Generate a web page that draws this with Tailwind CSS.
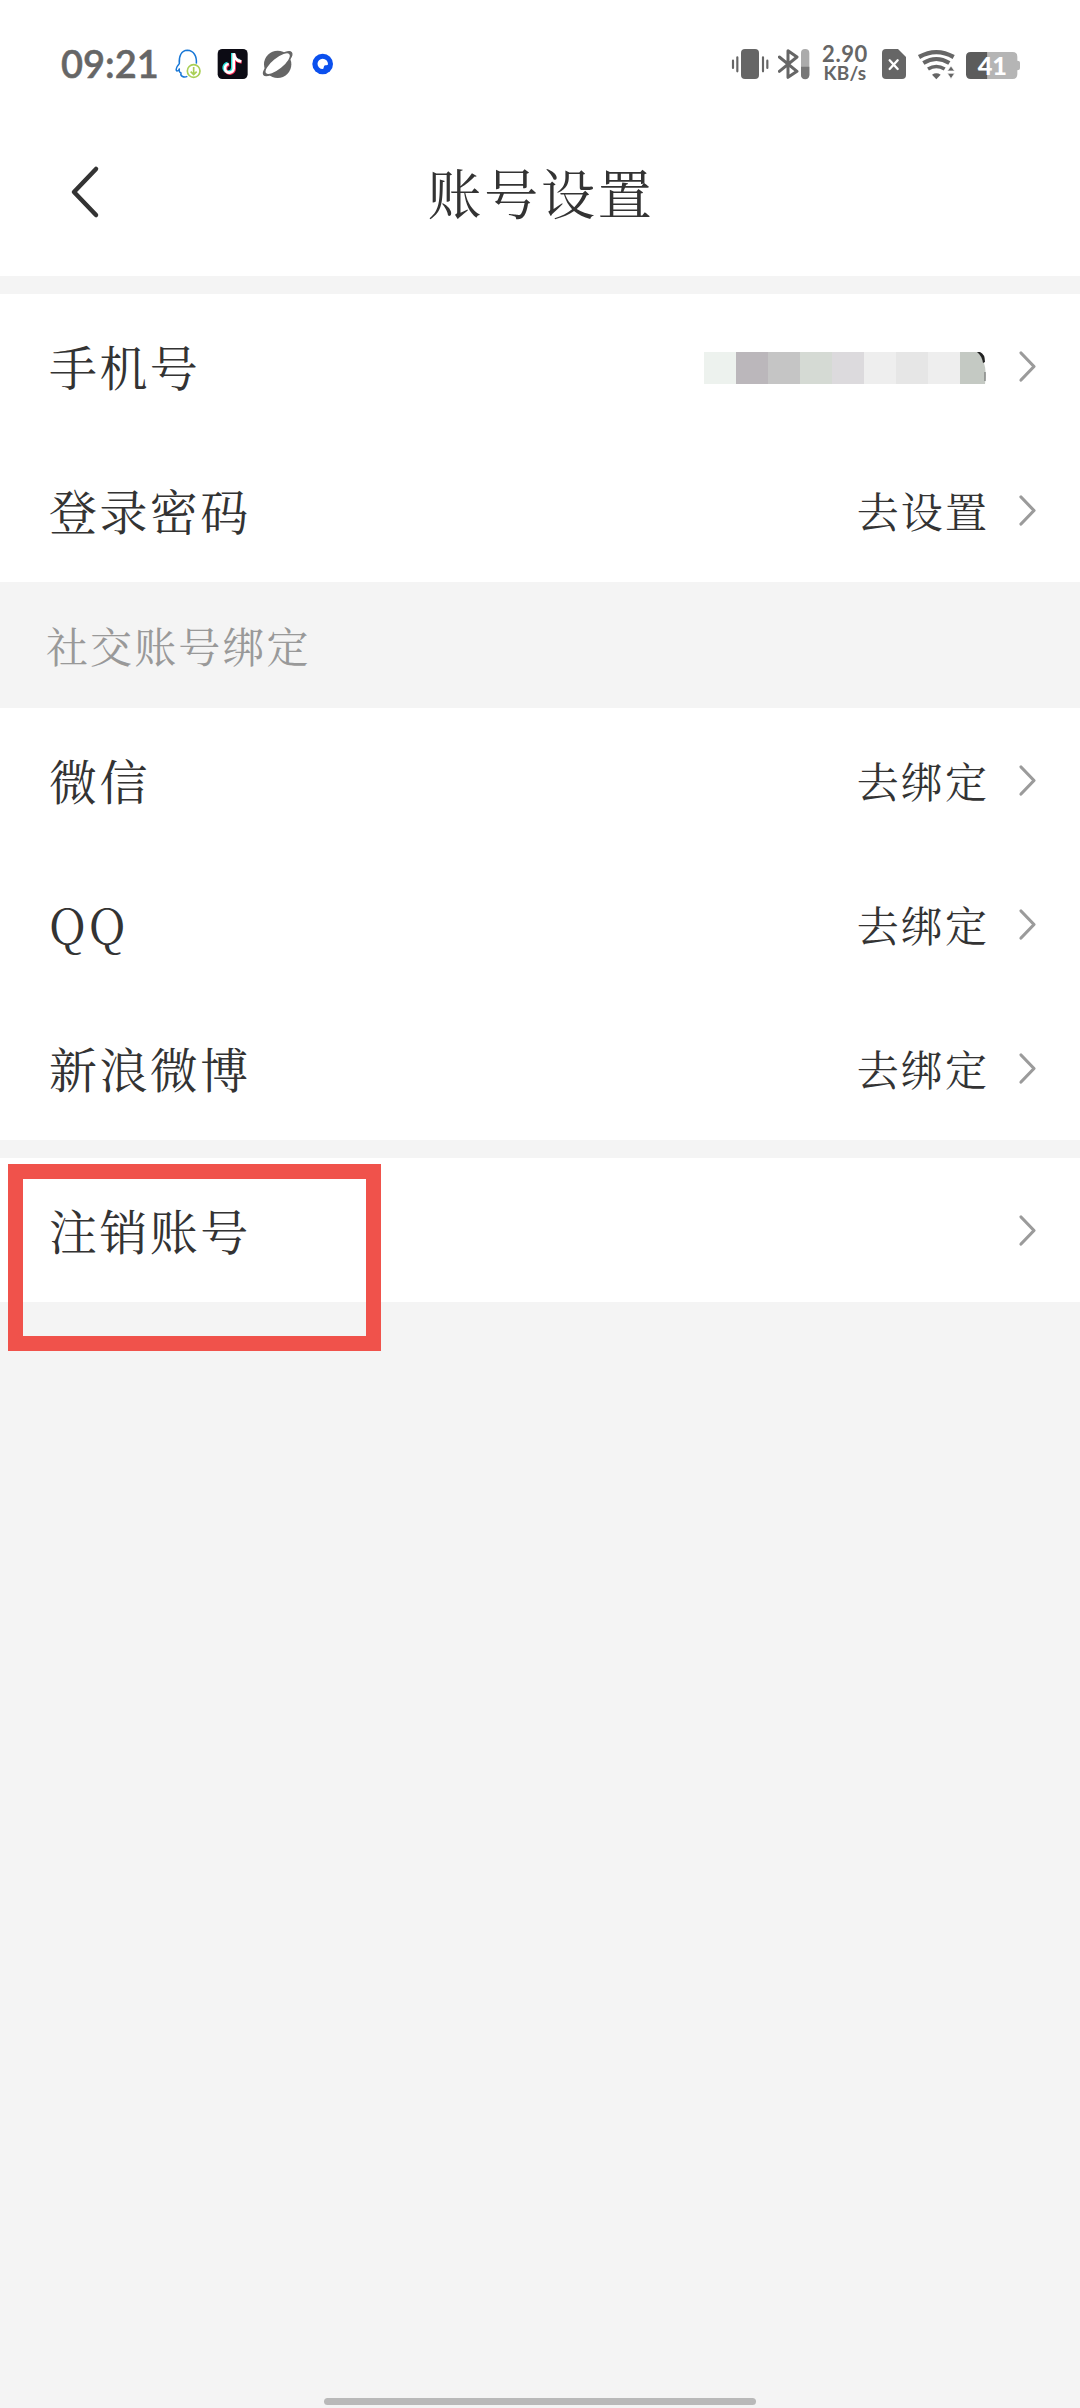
<!DOCTYPE html>
<html lang="zh-CN">
<head>
<meta charset="utf-8">
<title>账号设置</title>
<script src="https://cdn.jsdelivr.net/npm/@tailwindcss/browser@4"></script>
</head>
<body class="bg-[#f4f4f4]">
<svg class="hidden"><symbol id="chev" viewBox="0 0 20 34"><path d="M3 4L16 17.500L3 31" fill="none" stroke="#9b9b9b" stroke-width="3.200" stroke-linecap="round" stroke-linejoin="round"/></symbol></svg>
<div class="relative flex h-[2408px] w-[1080px] flex-col overflow-hidden font-['Noto_Serif_CJK_SC','Noto_Serif_SC','Noto_Sans_CJK_SC',serif] font-normal text-[#333]">

  <!-- status bar -->
  <div class="flex h-[106px] shrink-0 bg-white pt-[30px] font-['Lato',sans-serif] text-[#666]">
    <div class="ml-[61px] w-[112px] pt-[10px] text-[38px] leading-[46px] font-semibold whitespace-nowrap [-webkit-text-stroke:0.5px_#666]">09:21</div>
    <svg class="h-[70px] w-[36px]" viewBox="400 0 108 210" fill="none">
      <path d="M443 139C433 144 421 139 424 129C418 127 418 120 419 117C414 126 408 124 410 116C411 108 416 105 419 101C417 78 425 62 443 61C462 62 472 78 470 101" stroke="#1877d6" stroke-width="4.5" stroke-linejoin="round"/>
      <circle cx="462" cy="123" r="19" fill="#fff" stroke="#a9cf54" stroke-width="5"/>
      <path d="M462 111V133M453 125L462 134L471 125" stroke="#a9cf54" stroke-width="5"/>
    </svg>
    <svg class="h-[70px] w-[44px]" viewBox="508 0 132 210" fill="none" stroke-width="10">
      <rect x="534" y="57" width="90" height="90" rx="14" fill="#0c0b14"/>
      <g stroke="#27e5e0"><path d="M580 70V114A13 13 0 1 1 565 101M580 70C581 85 591 92 602 93" transform="translate(-1 -1)"/></g>
      <g stroke="#fb2d58"><path d="M584 73V117A13 13 0 1 1 569 104M584 73C585 88 595 95 606 96"/></g>
      <g stroke="#fff" stroke-width="8"><path d="M582 70V116A13 13 0 1 1 567 102M583 70C584 86 594 93 605 94"/></g>
    </svg>
    <svg class="h-[70px] w-[46px]" viewBox="640 0 138 210">
      <circle cx="714" cy="103" r="41" fill="#666"/>
      <g transform="rotate(-39 714 101)"><ellipse cx="714" cy="101" rx="53" ry="17" fill="#666" stroke="#666" stroke-width="4"/><ellipse cx="714" cy="101" rx="45" ry="16" fill="#fff"/></g>
    </svg>
    <svg class="h-[70px] w-[48px]" viewBox="778 0 144 210">
      <circle cx="849" cy="102" r="31" fill="#0b50ee"/>
      <path d="M849 86A15.500 15.500 0 1 0 849 117C854 117 850 108 857 106C862 105 865 106 865 102A16 16 0 0 0 849 86Z" fill="#fff"/>
    </svg>
    <svg class="ml-[381px] h-[70px] w-[50px]" viewBox="24 0 150 210">
      <rect x="63" y="57" width="54" height="90" rx="12" fill="#666"/>
      <path d="M39 92V114M52 82V124M129 82V124M142 92V114" stroke="#666" stroke-width="6.5" stroke-linecap="round"/>
    </svg>
    <svg class="h-[70px] w-[36px]" viewBox="174 0 108 210" fill="none">
      <path d="M178 81L231 124L204 142V62L231 81L178 124" stroke="#666" stroke-width="9" stroke-linecap="round" stroke-linejoin="round"/>
      <rect x="243" y="57" width="25" height="90" rx="12" fill="#ababab"/>
      <path d="M243 110H268V135A12 12 0 0 1 243 135Z" fill="#777"/>
    </svg>
    <div class="flex w-[62px] flex-col items-center pt-[14px] text-center font-bold whitespace-nowrap">
      <span class="text-[22px] leading-[20px] tracking-[0.6px]">2.90</span>
      <span class="text-[19px] leading-[17px] tracking-[0.2px]">KB/s</span>
    </div>
    <svg class="h-[70px] w-[34px]" viewBox="468 0 102 210">
      <path d="M498 57H534L558 81V135Q558 147 546 147H498Q486 147 486 135V69Q486 57 498 57Z" fill="#666"/>
      <path d="M509 91L533 117M533 91L509 117" stroke="#fff" stroke-width="7" stroke-linecap="round"/>
    </svg>
    <svg class="h-[70px] w-[50px]" viewBox="570 0 150 210" fill="none">
      <path d="M597 81Q649 52 701 81" stroke="#666" stroke-width="13"/>
      <path d="M610 99Q649 75 688 99" stroke="#666" stroke-width="12"/>
      <path d="M624 117Q649 102 674 117" stroke="#666" stroke-width="11"/>
      <path d="M636 134Q649 126 662 134L649 148Z" fill="#666"/>
      <path d="M682 123L693 108L704 123ZM682 130L693 146L704 130Z" fill="#666" stroke="#fff" stroke-width="2"/>
    </svg>
    <svg class="h-[70px] w-[64px] font-['Lato',sans-serif] font-black" viewBox="720 0 192 210">
      <path d="M802 66H878Q892 66 892 80V92Q900 92 900 99V115Q900 121 892 121V133Q892 147 878 147H802Z" fill="#b5b5b5"/>
      <path d="M802 66H752Q738 66 738 80V133Q738 147 752 147H802Z" fill="#5c5c5c"/>
      <text x="817" y="134" font-size="76" fill="#fff" text-anchor="middle">41</text>
    </svg>
  </div>

  <!-- title bar -->
  <header class="relative flex h-[170px] shrink-0 items-center justify-center bg-white">
    <svg class="absolute top-[58px] left-[67px] h-[56px] w-[36px]" viewBox="0 0 36 56"><path d="M29 5L7 28L29 51" fill="none" stroke="#333" stroke-width="4.500" stroke-linecap="round" stroke-linejoin="round"/></svg>
    <h1 class="pt-[2px] pl-[2px] text-[54px] leading-[78px] font-normal tracking-[0.05em]">账号设置</h1>
  </header>

  <section class="mt-[18px] shrink-0 bg-white">
    <div class="flex h-[144px] items-center pr-[42px] pl-[49px]">
      <span class="text-[48px] leading-[70px] tracking-[0.05em]">手机号</span>
      <div class="mt-[4px] mr-[32px] ml-auto flex h-[32px] w-[282px] overflow-hidden">
        <i class="w-8 shrink-0 bg-[#edf2ee]"></i><i class="w-8 shrink-0 bg-[#bbb7bb]"></i><i class="w-8 shrink-0 bg-[#c5c5c5]"></i><i class="w-8 shrink-0 bg-[#d5dad4]"></i><i class="w-8 shrink-0 bg-[#dcdadd]"></i><i class="w-8 shrink-0 bg-[#eeeeee]"></i><i class="w-8 shrink-0 bg-[#e6e6e6]"></i><i class="w-8 shrink-0 bg-[#eeeeee]"></i>
        <svg class="h-8 w-[26px] shrink-0" viewBox="0 0 26 32"><path d="M0 0H18Q28 11 25 32H0Z" fill="#c4c9c3"/><path d="M17 0H20Q25 2 25 10L23 11Q22 4 17 0Z" fill="#222"/><path d="M25 20V29" stroke="#666"/></svg>
      </div>
      <svg class="h-[34px] w-[20px]"><use href="#chev"/></svg>
    </div>
    <div class="flex h-[144px] items-center pr-[42px] pl-[49px]">
      <span class="text-[48px] leading-[70px] tracking-[0.05em]">登录密码</span>
      <span class="mr-[29px] ml-auto text-[42px] leading-[62px] tracking-[0.05em]">去设置</span>
      <svg class="h-[34px] w-[20px]"><use href="#chev"/></svg>
    </div>
  </section>

  <h2 class="flex h-[126px] shrink-0 items-center pl-[46px] text-[42px] leading-[62px] font-normal tracking-[0.05em] text-[#999]">社交账号绑定</h2>

  <section class="shrink-0 bg-white">
    <div class="flex h-[144px] items-center pr-[42px] pl-[49px]">
      <span class="text-[48px] leading-[70px] tracking-[0.05em]">微信</span>
      <span class="mr-[29px] ml-auto text-[42px] leading-[62px] tracking-[0.05em]">去绑定</span>
      <svg class="h-[34px] w-[20px]"><use href="#chev"/></svg>
    </div>
    <div class="flex h-[144px] items-center pr-[42px] pl-[49px]">
      <span class="text-[48px] leading-[70px] tracking-[0.05em]">QQ</span>
      <span class="mr-[29px] ml-auto text-[42px] leading-[62px] tracking-[0.05em]">去绑定</span>
      <svg class="h-[34px] w-[20px]"><use href="#chev"/></svg>
    </div>
    <div class="flex h-[144px] items-center pr-[42px] pl-[49px]">
      <span class="text-[48px] leading-[70px] tracking-[0.05em]">新浪微博</span>
      <span class="mr-[29px] ml-auto text-[42px] leading-[62px] tracking-[0.05em]">去绑定</span>
      <svg class="h-[34px] w-[20px]"><use href="#chev"/></svg>
    </div>
  </section>

  <section class="relative mt-[18px] shrink-0 bg-white">
    <div class="flex h-[144px] items-center justify-between pr-[42px] pl-[49px]">
      <span class="text-[48px] leading-[70px] tracking-[0.05em]">注销账号</span>
      <svg class="h-[34px] w-[20px]"><use href="#chev"/></svg>
    </div>
    <div class="absolute top-[6px] left-[8px] h-[187px] w-[373px] border-[15px] border-[#f0524b]"></div>
  </section>

  <div class="mt-auto mb-[3px] h-[7px] w-[432px] shrink-0 self-center rounded-full bg-[#b9b9b9]"></div>
</div>
</body>
</html>
